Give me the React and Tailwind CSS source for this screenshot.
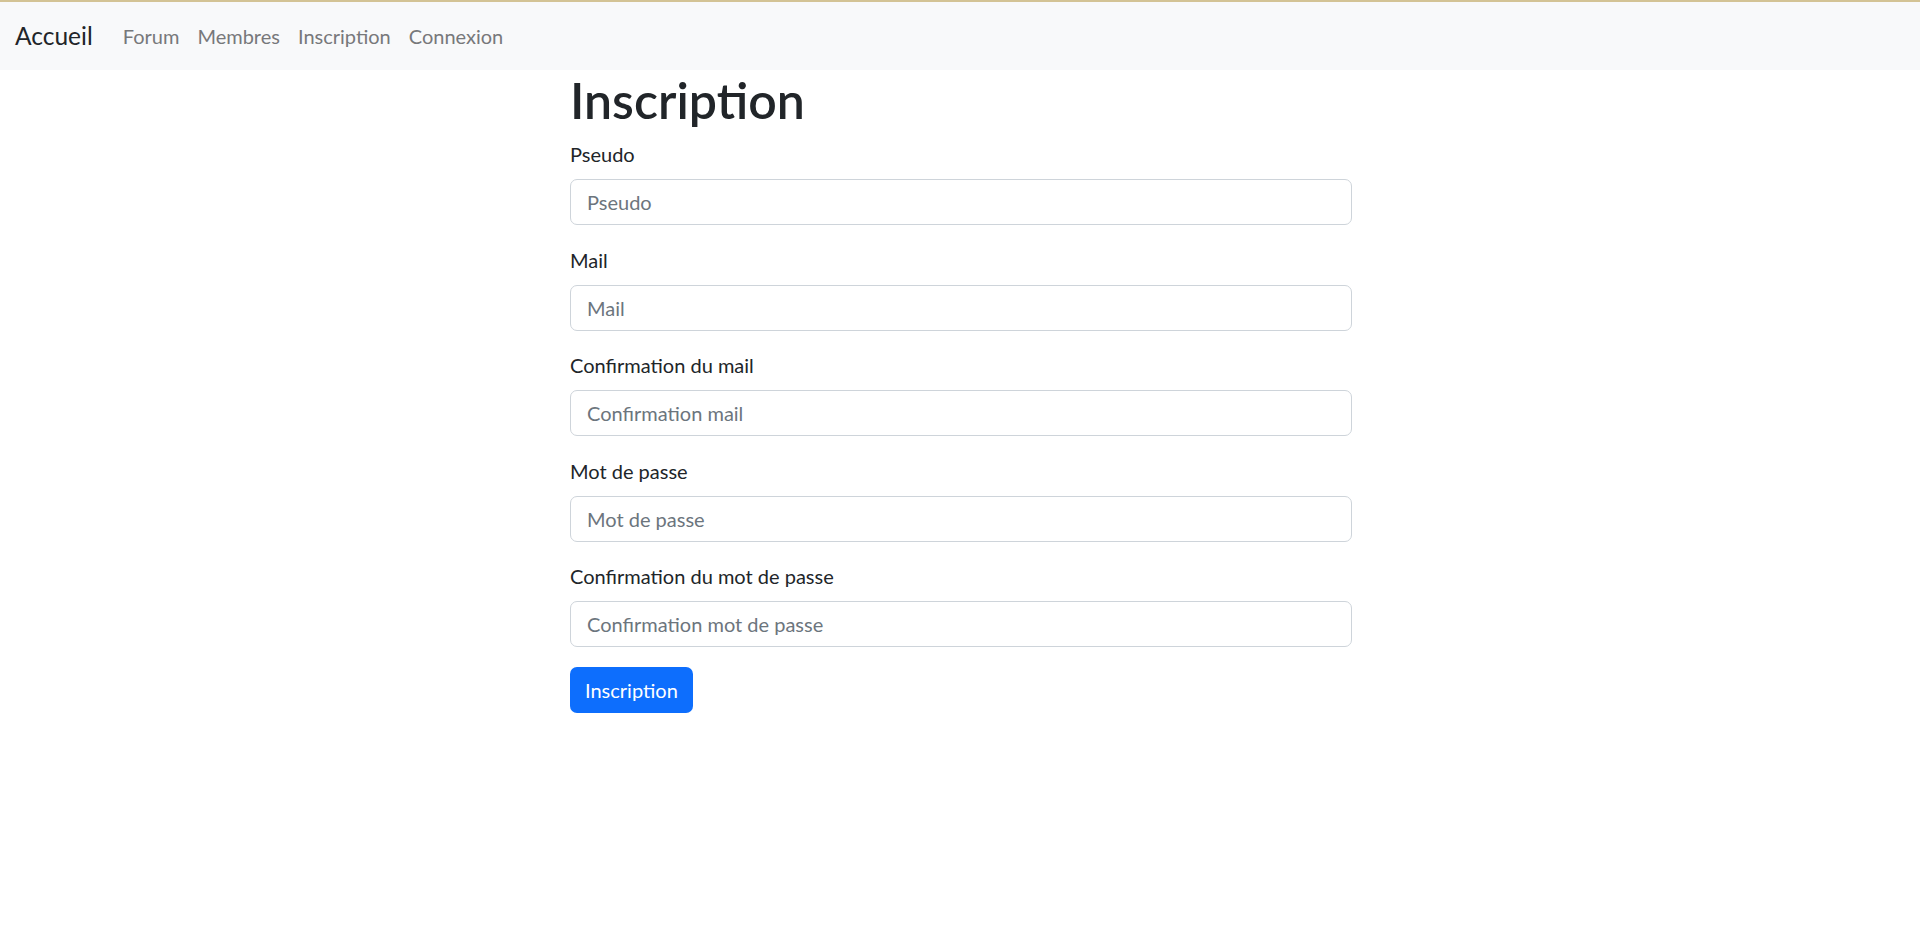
export default function App() {
  const fields = [
    { label: "Pseudo", ph: "Pseudo", type: "text" },
    { label: "Mail", ph: "Mail", type: "email" },
    { label: "Confirmation du mail", ph: "Confirmation mail", type: "email" },
    { label: "Mot de passe", ph: "Mot de passe", type: "password" },
    { label: "Confirmation du mot de passe", ph: "Confirmation mot de passe", type: "password" },
  ];
  return (
    <div className="min-h-screen bg-white text-[#212529] font-['Lato',sans-serif]">
      <nav className="h-[70px] border-t-2 border-[#d3c395] bg-[#f8f9fa] flex items-center px-[15px]">
        <a className="text-[24.5px] leading-[30px] text-[#212529] mr-[21px]">Accueil</a>
        <div className="flex text-[20px] leading-[30px] text-[#77787a]">
          <a className="px-[9px]">Forum</a>
          <a className="px-[9px]">Membres</a>
          <a className="px-[9px]">Inscription</a>
          <a className="px-[9px]">Connexion</a>
        </div>
      </nav>
      <div className="w-[782px] ml-[570px]">
        <h1 className="text-[50px] leading-[60px] font-semibold mb-[9px]">Inscription</h1>
        <form className="flex flex-col">
          {fields.map((f) => (
            <div key={f.label} className="mb-[19.5px] flex flex-col">
              <label className="text-[20px] leading-[30px] mb-[10px]">{f.label}</label>
              <input
                type={f.type}
                placeholder={f.ph}
                className="h-[46px] w-full border border-[#ced4da] rounded-[7px] px-[16px] text-[20px] placeholder:text-[#6c757d] outline-none"
              />
            </div>
          ))}
          <div>
            <button className="h-[46px] px-[15px] bg-[#0d6efd] text-white text-[20px] rounded-[7px]">
              Inscription
            </button>
          </div>
        </form>
      </div>
    </div>
  );
}
